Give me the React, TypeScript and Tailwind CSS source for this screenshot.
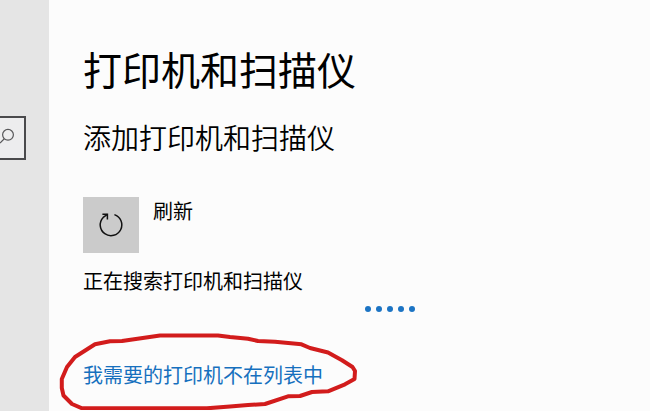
function SearchBox() {
  return (
    <label className="relative mr-[23px] flex h-11 items-center border-2 border-l-0 border-[#4a4a4c] bg-[#ededee]">
      <svg className="mb-1 h-4 w-4" viewBox="0 0 16 16" fill="none" stroke="#58585a" strokeWidth="1.2" aria-hidden="true">
        <circle cx="8" cy="6.8" r="5.4" />
        <path d="M4.3 10.8 0 15" />
      </svg>
      <input type="search" aria-label="查找设置" className="absolute inset-0 w-full bg-transparent outline-none" />
    </label>
  );
}

function RefreshIcon() {
  return (
    <svg className="h-7 w-7" viewBox="0 0 28 28" fill="none" stroke="#111" strokeWidth="1.5" aria-hidden="true">
      <path d="M17.4 3.6A10.8 10.8 0 1 1 6.2 6.4L10.4 3.4" />
      <path d="M5.4 3.2H10.4V8.4" />
    </svg>
  );
}

function ProgressDots() {
  return (
    <div className="mt-[11px] ml-[282px] flex gap-[5px]" role="progressbar" aria-label="正在搜索">
      {[0, 1, 2, 3, 4].map((dot) => (
        <span key={dot} className="size-1.5 rounded-full bg-[#1c74c4]" />
      ))}
    </div>
  );
}

function RedCircle() {
  return (
    <svg
      className="pointer-events-none absolute -top-8 -left-[33px] h-[81px] w-[310px]"
      viewBox="50 330 310 81"
      fill="none"
      stroke="#d21c1c"
      strokeWidth="4"
      strokeLinejoin="round"
      aria-hidden="true"
    >
      <path d="M160 336.5H218L230 338 248 339.7 258 342 275 342.8 301.5 345.3 310 349 328 353.5 342 361.3 352.5 368 355 372 354.5 380 345 385.3 328 392.3 312 393 300 397 288 397.3 265 405 248 406 230 407.5 207 409.3H82L72 405 63.5 396.5 61.8 389V380L67 368 75 358 95 345.3 110 342.3 122 342Z" />
    </svg>
  );
}

export default function App() {
  return (
    <div className="flex min-h-screen bg-[#fcfcfc] font-['Noto_Sans_CJK_SC',sans-serif] text-black">
      <aside className="w-[49px] shrink-0 bg-[#e5e5e5] pt-[116px]">
        <SearchBox />
      </aside>
      <main className="min-w-0 flex-1 pt-11 pl-[34px]">
        <h1 className="text-[39px] leading-[48px]">打印机和扫描仪</h1>
        <h2 className="mt-[27px] text-[28px] leading-9 font-[350]">添加打印机和扫描仪</h2>
        <div className="mt-[42px] flex gap-3.5">
          <button id="refresh" type="button" aria-labelledby="refresh-label" className="flex size-14 items-center justify-center bg-[#cbcbcb]">
            <RefreshIcon />
          </button>
          <label id="refresh-label" htmlFor="refresh" className="text-[20px] leading-7">刷新</label>
        </div>
        <p className="mt-3.5 text-[20px] leading-7">正在搜索打印机和扫描仪</p>
        <ProgressDots />
        <div className="relative mt-[49px] w-fit">
          <a href="#add-printer" className="block text-[20px] leading-7 text-[#1670be]">我需要的打印机不在列表中</a>
          <RedCircle />
        </div>
      </main>
    </div>
  );
}
